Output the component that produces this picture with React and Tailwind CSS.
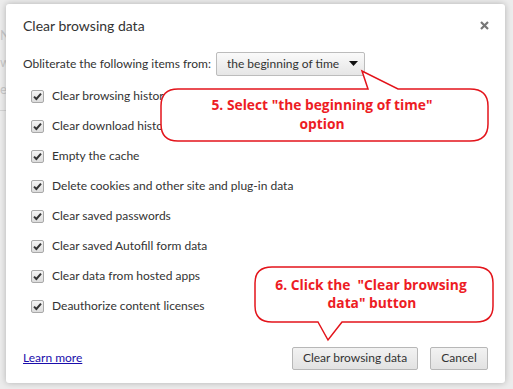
import React from 'react';

const items = [
  'Clear browsing history',
  'Clear download history',
  'Empty the cache',
  'Delete cookies and other site and plug-in data',
  'Clear saved passwords',
  'Clear saved Autofill form data',
  'Clear data from hosted apps',
  'Deauthorize content licenses',
];

function CheckBox() {
  return (
    <span className="w-[13px] h-[13px] rounded-[2px] border border-[#a9a9a9] bg-gradient-to-b from-[#f4f4f4] to-[#dcdcdc] flex items-center justify-center shrink-0">
      <svg width="11" height="11" viewBox="0 0 11 11">
        <path d="M2 5.6 L4.4 8 L9 2.6" fill="none" stroke="#333" strokeWidth="2" />
      </svg>
    </span>
  );
}

function Callouts() {
  return (
    <svg className="absolute inset-0 pointer-events-none" width="513" height="389" viewBox="0 0 513 389">
      <path
        d="M368 89 L362 71 L398 89 L470 89 Q488 89 488 106 L488 124 Q488 141 470 141 L178 141 Q161 141 161 124 L161 106 Q161 89 178 89 Z"
        fill="white"
        stroke="#e3141b"
        strokeWidth="1.5"
      />
      <path
        d="M318 322 L328 340 L342 322 L476 322 Q493 322 493 306 L493 283 Q493 267 476 267 L272 267 Q255 267 255 283 L255 306 Q255 322 272 322 Z"
        fill="white"
        stroke="#e3141b"
        strokeWidth="1.5"
      />
      <g fill="#ed1c24" fontFamily="'Open Sans', sans-serif" fontWeight="700" fontSize="13.8" textAnchor="middle">
        <text x="322" y="110">5. Select "the beginning of time"</text>
        <text x="322" y="129">option</text>
        <text x="371" y="290">{'6. Click the \u00a0"Clear browsing'}</text>
        <text x="372" y="308">data" button</text>
      </g>
    </svg>
  );
}

export default function App() {
  return (
    <div className="relative w-[513px] h-[389px] overflow-hidden bg-[#ececec] font-['Lato',sans-serif] text-[12px] text-[#333]">
      <div className="absolute left-0 top-[22px] text-[#c8c8c8] leading-[27px] text-[13px]">
        <div>N</div>
        <div>w</div>
        <div>e</div>
      </div>
      <div className="absolute left-0 top-[110px] w-[8px] h-px bg-[#d4d4d4]" />

      <div className="absolute left-[6px] top-[4px] w-[499px] h-[379px] bg-white rounded-[3px] shadow-[0_0_6px_rgba(0,0,0,0.25)] px-[17px] flex flex-col">
        <div className="h-[42px] flex items-center justify-between">
          <span className="text-[14px] text-[#333]">Clear browsing data</span>
          <svg width="9" height="9" viewBox="0 0 9 9" className="mr-[-1px]">
            <path d="M1 1 L8 8 M8 1 L1 8" stroke="#777" strokeWidth="2.2" />
          </svg>
        </div>

        <div className="mt-[6px] h-[24px] flex items-center gap-[5px]">
          <span>Obliterate the following items from:</span>
          <div className="w-[149px] h-[24px] border border-[#bcbcbc] rounded-[2px] bg-gradient-to-b from-[#fafafa] to-[#e6e6e6] flex items-center justify-between pl-[10px] pr-[6px] whitespace-nowrap">
            <span>the beginning of time</span>
            <svg width="9" height="6" viewBox="0 0 9 6">
              <path d="M0 0 L9 0 L4.5 5 Z" fill="#111" />
            </svg>
          </div>
        </div>

        <div className="mt-[5px] pl-[8px] flex flex-col">
          {items.map((label) => (
            <div key={label} className="h-[30px] flex items-center gap-[8px]">
              <CheckBox />
              <span>{label}</span>
            </div>
          ))}
        </div>

        <div className="mt-auto mb-[14px] h-[22px] flex items-center justify-between">
          <a href="#" className="text-[#1a0dab] underline decoration-[#1a0dab]">Learn more</a>
          <div className="flex gap-[12px]">
            <button className="w-[126px] h-[23px] border border-[#b7b7b7] rounded-[2px] bg-gradient-to-b from-[#f2f2f2] to-[#e2e2e2] text-[#333]">
              Clear browsing data
            </button>
            <button className="w-[58px] h-[23px] border border-[#b7b7b7] rounded-[2px] bg-gradient-to-b from-[#f2f2f2] to-[#e2e2e2] text-[#333]">
              Cancel
            </button>
          </div>
        </div>
      </div>

      <Callouts />
    </div>
  );
}
